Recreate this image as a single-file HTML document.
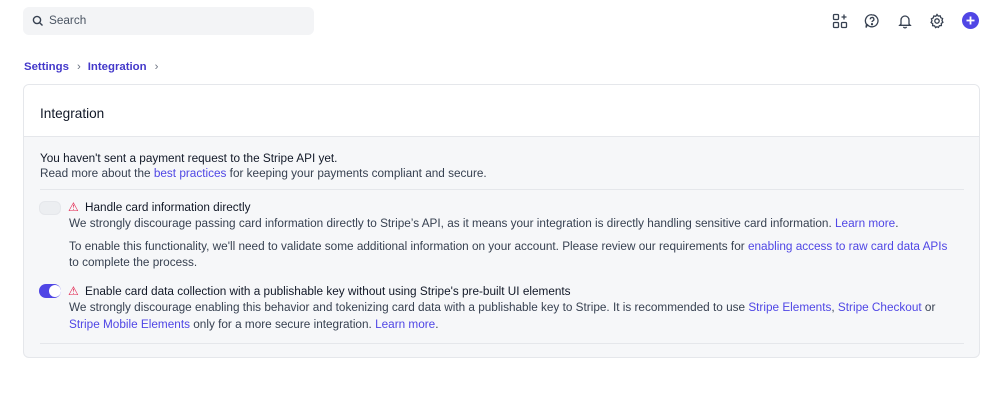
<!DOCTYPE html><html><head><style>
body{margin:0;width:1000px;height:402px;background:#fff;font-family:"Liberation Sans",sans-serif;font-size:11.78px;color:#1f2937;position:relative;overflow:hidden}
.a{position:absolute}
a{color:#4f46e5;text-decoration:none}
.t{position:absolute;white-space:nowrap;line-height:16px}
</style></head><body>
<div class="a" style="left:23px;top:7px;width:291px;height:28px;background:#f3f4f6;border-radius:6px"></div>
<svg class="a" style="left:32px;top:15px" width="12" height="12" viewBox="0 0 12 12"><circle cx="5" cy="5" r="3.6" fill="none" stroke="#374151" stroke-width="1.4"/><path d="M7.7 7.7L10.5 10.5" stroke="#374151" stroke-width="1.4"/></svg>
<div class="t" style="left:49px;top:13px;color:#4b5563">Search</div>
<svg class="a" style="left:832px;top:13px" width="16" height="16" viewBox="0 0 16 16" fill="none" stroke="#374151" stroke-width="1.3"><rect x="1.5" y="1.5" width="5" height="5" rx="1"/><rect x="1.5" y="9.5" width="5" height="5" rx="1"/><rect x="9.5" y="9.5" width="5" height="5" rx="1"/><path d="M12 1.5v5M9.5 4h5"/></svg>
<svg class="a" style="left:864px;top:13px" width="16" height="16" viewBox="0 0 16 16" fill="none" stroke="#374151" stroke-width="1.3"><path d="M8 1.8a6 6 0 1 1-4.5 10L2 14.5l.5-3.3A6 6 0 0 1 8 1.8z"/><path d="M6.3 6.3a1.8 1.8 0 1 1 2.5 1.6c-.5.3-.8.6-.8 1.2"/><circle cx="8" cy="11.2" r=".5" fill="#374151"/></svg>
<svg class="a" style="left:897px;top:13px" width="16" height="16" viewBox="0 0 16 16" fill="none" stroke="#374151" stroke-width="1.3"><path d="M4 11V7a4 4 0 0 1 8 0v4l1.2 1.3H2.8z"/><path d="M6.5 13.8a1.6 1.6 0 0 0 3 0"/></svg>
<svg class="a" style="left:929px;top:13px" width="16" height="16" viewBox="0 0 16 16" fill="none" stroke="#374151" stroke-width="1.3"><circle cx="8" cy="8" r="2.2"/><path d="M8 1.5l1.2 1.6 2-.3.6 1.9 1.8.9-.6 1.9.9 1.8-1.6 1.2.1 2-2 .2-1 1.7L8 13.7l-1.4 .9-1-1.7-2-.2.1-2L2.1 9.5l.9-1.8-.6-1.9 1.8-.9.6-1.9 2 .3z"/></svg>
<div class="a" style="left:962px;top:12px;width:17px;height:17px;border-radius:50%;background:#5046e5"></div>
<svg class="a" style="left:962px;top:12px" width="17" height="17"><path d="M8.5 4.5v8M4.5 8.5h8" stroke="#fff" stroke-width="1.8"/></svg>
<div class="t" style="left:24px;top:59px;font-size:11.4px"><a style="font-weight:600;color:#4338ca">Settings</a><span style="color:#6b7280;margin:0 7px 0 8px">›</span><a style="font-weight:600;color:#4338ca">Integration</a><span style="color:#6b7280;margin-left:8px">›</span></div>
<div class="a" style="left:23px;top:84px;width:955px;height:272px;border:1px solid #e5e7eb;border-radius:6px;background:#f6f7f9;overflow:hidden">
<div class="a" style="left:0;top:0;width:955px;height:51px;background:#fff;border-bottom:1px solid #e5e7eb"></div>
<div class="t" style="left:16px;top:21px;font-size:13.6px;color:#111827">Integration</div>
<div class="t" style="left:16px;top:66px;color:#111827">You haven't sent a payment request to the Stripe API yet.</div>
<div class="t" style="left:16px;top:81px;color:#374151">Read more about the <a>best practices</a> for keeping your payments compliant and secure.</div>
<div class="a" style="left:16px;top:104px;width:924px;height:1px;background:#e5e7eb"></div>
<div class="a" style="left:15px;top:116px;width:20px;height:12px;border-radius:6px;background:#eceef1;border:1px solid #e5e7eb"></div>
<div class="t" style="left:44px;top:115px;color:#e11d48">⚠</div>
<div class="t" style="left:61px;top:115px;color:#111827">Handle card information directly</div>
<div class="t" style="left:45px;top:131px;color:#374151">We strongly discourage passing card information directly to Stripe’s API, as it means your integration is directly handling sensitive card information. <a>Learn more</a>.</div>
<div class="t" style="left:45px;top:154px;color:#374151">To enable this functionality, we'll need to validate some additional information on your account. Please review our requirements for <a>enabling access to raw card data APIs</a></div>
<div class="t" style="left:45px;top:170px;color:#374151">to complete the process.</div>
<div class="a" style="left:15px;top:199px;width:22px;height:14px;border-radius:7px;background:#5046e5"></div>
<div class="a" style="left:25px;top:200px;width:12px;height:12px;border-radius:50%;background:#fff"></div>
<div class="t" style="left:44px;top:199px;color:#e11d48">⚠</div>
<div class="t" style="left:61px;top:199px;color:#111827">Enable card data collection with a publishable key without using Stripe's pre-built UI elements</div>
<div class="t" style="left:45px;top:215px;color:#374151">We strongly discourage enabling this behavior and tokenizing card data with a publishable key to Stripe. It is recommended to use <a>Stripe Elements</a>, <a>Stripe Checkout</a> or</div>
<div class="t" style="left:45px;top:232px;color:#374151"><a>Stripe Mobile Elements</a> only for a more secure integration. <a>Learn more</a>.</div>
<div class="a" style="left:16px;top:258px;width:924px;height:1px;background:#e5e7eb"></div>
</div>
</body></html>
